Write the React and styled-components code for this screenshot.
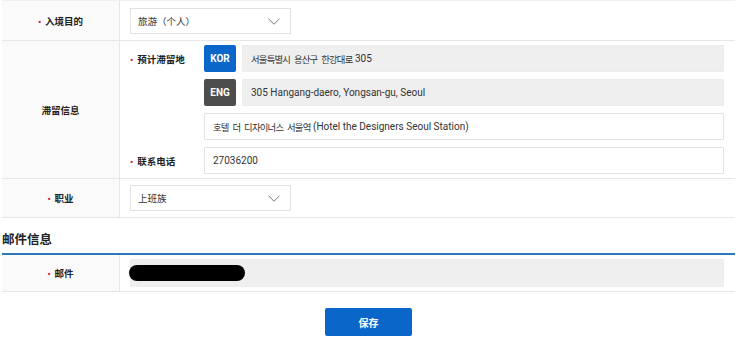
import styled, { createGlobalStyle } from "styled-components";

const GlobalStyle = createGlobalStyle`
  body {
    margin: 0;
    background: #fff;
    font-family: Roboto, "Noto Sans CJK SC", sans-serif;
    color: #333;
  }
`;

const Chevron = () => (
  <svg width="12" height="7" viewBox="0 0 12 7" fill="none">
    <path d="M0.5 0.8l5.5 5.4 5.5-5.4" stroke="#777" strokeWidth="1" />
  </svg>
);

const App = () => {
  return (
    <>
      <GlobalStyle />
      <Page>
        <Table>
          <Row>
            <LabelCell>
              <Required>入境目的</Required>
            </LabelCell>
            <Cell $pad="7px 10px 6px">
              <Select>
                <span>旅游（个人）</span>
                <Chevron />
              </Select>
            </Cell>
          </Row>
          <Row>
            <LabelCell>滞留信息</LabelCell>
            <Cell $pad="4px 11px 4px 10px">
              <SubGrid>
                <SubLabel>
                  <Required>预计滞留地</Required>
                </SubLabel>
                <Fields>
                  <AddressLine>
                    <Badge $bg="#0a66c8">KOR</Badge>
                    <Input $readonly $grow>
                      <Ko>서울특별시 용산구 한강대로</Ko> 305
                    </Input>
                  </AddressLine>
                  <AddressLine>
                    <Badge $bg="#4d4d4d">ENG</Badge>
                    <Input $readonly $grow>305 Hangang-daero, Yongsan-gu, Seoul</Input>
                  </AddressLine>
                  <Input>
                    <Ko>호텔 더 디자이너스 서울역</Ko> (Hotel the Designers Seoul Station)
                  </Input>
                </Fields>
                <SubLabel>
                  <Required>联系电话</Required>
                </SubLabel>
                <Input>27036200</Input>
              </SubGrid>
            </Cell>
          </Row>
          <Row>
            <LabelCell>
              <Required>职业</Required>
            </LabelCell>
            <Cell $pad="6px 10px 6px">
              <Select>
                <span>上班族</span>
                <Chevron />
              </Select>
            </Cell>
          </Row>
        </Table>

        <SectionTitle>邮件信息</SectionTitle>
        <Table $accent>
          <Row>
            <LabelCell>
              <Required>邮件</Required>
            </LabelCell>
            <Cell $pad="4px 11px 4px 10px">
              <Input $readonly $tall>
                <Redacted />
              </Input>
            </Cell>
          </Row>
        </Table>

        <Actions>
          <SaveButton>保存</SaveButton>
        </Actions>
      </Page>
    </>
  );
};

const Page = styled.div`
  width: 733px;
  padding-left: 2px;
`;

const Table = styled.div`
  border-top: ${({ $accent }) => ($accent ? "2px solid #2b78b8" : "1px solid #efefef")};
`;

const Row = styled.div`
  display: grid;
  grid-template-columns: 118px 1fr;
  border-bottom: 1px solid #e6e6e6;
`;

const LabelCell = styled.div`
  display: flex;
  align-items: center;
  justify-content: center;
  background: #fafafa;
  border-right: 1px solid #e6e6e6;
  font-size: 9.5px;
  font-weight: 700;
  color: #222;
`;

const Cell = styled.div`
  padding: ${({ $pad }) => $pad};
`;

const Required = styled.span`
  &::before {
    content: "•";
    color: #d6204e;
    margin-right: 4px;
    font-size: 9px;
  }
`;

const Select = styled.div`
  width: 161px;
  height: 26px;
  box-sizing: border-box;
  border: 1px solid #e2e2e2;
  display: flex;
  align-items: center;
  justify-content: space-between;
  padding: 0 10px 0 7px;
  font-size: 9.5px;
  color: #333;
`;

const SubGrid = styled.div`
  display: grid;
  grid-template-columns: 74px 1fr;
  row-gap: 7px;
`;

const SubLabel = styled.div`
  height: 27px;
  display: flex;
  align-items: center;
  font-size: 9.5px;
  font-weight: 700;
  color: #222;
`;

const Fields = styled.div`
  display: flex;
  flex-direction: column;
  gap: 7px;
`;

const AddressLine = styled.div`
  display: flex;
  gap: 6px;
`;

const Badge = styled.div`
  width: 32px;
  height: 27px;
  flex-shrink: 0;
  display: flex;
  align-items: center;
  justify-content: center;
  border-radius: 2px;
  background: ${({ $bg }) => $bg};
  color: #fff;
  font-size: 10px;
  font-weight: 700;
`;

const Input = styled.div`
  flex-grow: ${({ $grow }) => ($grow ? 1 : 0)};
  height: ${({ $tall }) => ($tall ? "28px" : "27px")};
  box-sizing: border-box;
  display: flex;
  align-items: center;
  padding: 0 8px;
  font-size: 10px;
  color: #333;
  white-space: pre;
  background: ${({ $readonly }) => ($readonly ? "#efefef" : "#fff")};
  border: 1px solid ${({ $readonly }) => ($readonly ? "#ececec" : "#e2e2e2")};
  border-radius: 1px;
`;

const Ko = styled.span`
  font-family: "Noto Sans CJK KR", sans-serif;
  font-size: 9.4px;
  letter-spacing: -0.8px;
  word-spacing: 2.5px;
`;

const Redacted = styled.span`
  display: block;
  width: 116px;
  height: 16px;
  margin-left: -10px;
  background: #000;
  border-radius: 8px;
`;

const SectionTitle = styled.h2`
  margin: 0;
  padding: 13px 0 4px;
  font-size: 12.5px;
  font-weight: 700;
  color: #222;
  line-height: 18px;
`;

const Actions = styled.div`
  display: flex;
  justify-content: center;
  padding-top: 16px;
`;

const SaveButton = styled.button`
  width: 87px;
  height: 28px;
  border: none;
  border-radius: 2px;
  background: #0a66c8;
  color: #fff;
  font-family: "Noto Sans CJK SC", sans-serif;
  font-size: 10px;
  font-weight: 700;
`;

export default App;
